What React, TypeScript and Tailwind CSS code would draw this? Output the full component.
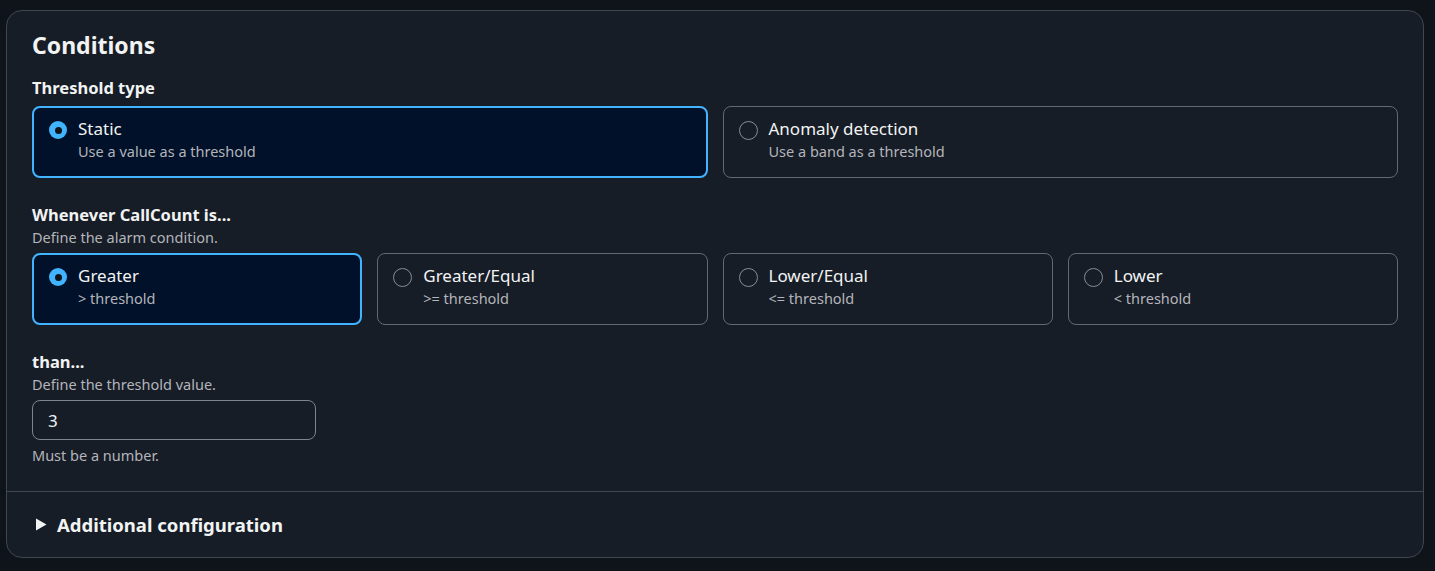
import { useState } from "react";

type Opt = { id: string; title: string; desc: string };

const thresholdTypes: Opt[] = [
  { id: "static", title: "Static", desc: "Use a value as a threshold" },
  { id: "anomaly", title: "Anomaly detection", desc: "Use a band as a threshold" },
];

const comparisons: Opt[] = [
  { id: "gt", title: "Greater", desc: "> threshold" },
  { id: "gte", title: "Greater/Equal", desc: ">= threshold" },
  { id: "lte", title: "Lower/Equal", desc: "<= threshold" },
  { id: "lt", title: "Lower", desc: "< threshold" },
];

const Radio = ({ checked }: { checked: boolean }) =>
  checked ? (
    <span className="mt-[4px] flex h-[18px] w-[18px] shrink-0 items-center justify-center rounded-full bg-[#42b4ff]">
      <span className="h-[7px] w-[7px] rounded-full bg-[#0f141a]" />
    </span>
  ) : (
    <span className="mt-[4px] h-[19px] w-[19px] shrink-0 rounded-full border-[1.5px] border-[#8c8c94]" />
  );

const Tile = ({ opt, checked, onClick }: { opt: Opt; checked: boolean; onClick: () => void }) => (
  <button
    type="button"
    onClick={onClick}
    className={
      checked
        ? "flex h-[72px] gap-[11px] rounded-lg border-2 border-[#42b4ff] bg-[#001129] pl-[15px] pt-[9px] text-left"
        : "flex h-[72px] gap-[11px] rounded-lg border border-[#656871] bg-[#161d26] pl-[15px] pt-[10px] text-left"
    }
  >
    <Radio checked={checked} />
    <div className="flex flex-col">
      <span className="text-[17px] leading-[24px] text-[#f2f3f3]">{opt.title}</span>
      <span className="text-[14.5px] leading-[21px] text-[#b4b4bb]">{opt.desc}</span>
    </div>
  </button>
);

export default function App() {
  const [type, setType] = useState("static");
  const [cmp, setCmp] = useState("gt");

  return (
    <div className="min-h-[571px] bg-[#0f141a] pl-[6px] pr-[11px] pt-[10px] font-['Noto_Sans',sans-serif]">
      <div className="rounded-2xl border border-[#424650] bg-[#161d26]">
        <div className="px-[25px] pb-[25px] pt-[19px]">
          <h2 className="text-[23px] font-bold leading-[30px] text-[#f2f3f3]">Conditions</h2>

          <div className="mt-[17px] text-[16.5px] font-bold leading-[22px] text-[#f2f3f3]">Threshold type</div>
          <div className="mt-[7px] grid grid-cols-2 gap-[15px]">
            {thresholdTypes.map((o) => (
              <Tile key={o.id} opt={o} checked={type === o.id} onClick={() => setType(o.id)} />
            ))}
          </div>

          <div className="mt-[26px] text-[16.5px] font-bold leading-[22px] text-[#f2f3f3]">Whenever CallCount is...</div>
          <div className="text-[14.5px] leading-[22px] text-[#b4b4bb]">Define the alarm condition.</div>
          <div className="mt-[5px] grid grid-cols-4 gap-[15px]">
            {comparisons.map((o) => (
              <Tile key={o.id} opt={o} checked={cmp === o.id} onClick={() => setCmp(o.id)} />
            ))}
          </div>

          <div className="mt-[26px] text-[16.5px] font-bold leading-[22px] text-[#f2f3f3]">than...</div>
          <div className="text-[14.5px] leading-[22px] text-[#b4b4bb]">Define the threshold value.</div>
          <input
            defaultValue="3"
            className="mt-[5px] h-[40px] w-[284px] rounded-lg border border-[#7d8492] bg-[#161d26] px-[15px] text-[17px] text-[#f2f3f3] outline-none"
          />
          <div className="mt-[4px] text-[14.5px] leading-[22px] text-[#b4b4bb]">Must be a number.</div>
        </div>

        <div className="flex h-[66px] items-center gap-[10px] border-t border-[#424650] px-[29px]">
          <svg width="12" height="13" viewBox="0 0 12 13" className="-ml-[1px]">
            <path d="M1 0.5 L11.5 6.5 L1 12.5 Z" fill="#f2f3f3" />
          </svg>
          <span className="text-[18.5px] font-bold leading-[24px] text-[#f2f3f3]">Additional configuration</span>
        </div>
      </div>
    </div>
  );
}
